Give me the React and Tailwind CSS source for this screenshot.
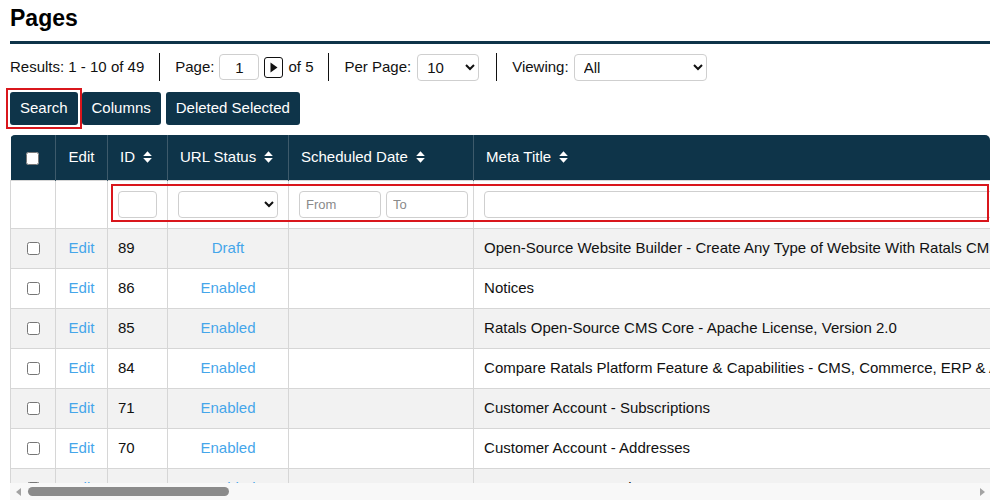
import React from "react";

const SortIcon = () => (
  <svg width="9" height="12" viewBox="0 0 9 12" className="inline-block ml-[8px] align-[-1px]">
    <path d="M4.5 0.3 L8.8 5 H0.2 Z" fill="white" />
    <path d="M0.2 7 H8.8 L4.5 11.7 Z" fill="white" />
  </svg>
);

const rows = [
  { id: 89, status: "Draft", title: "Open-Source Website Builder - Create Any Type of Website With Ratals CMS & Commerce" },
  { id: 86, status: "Enabled", title: "Notices" },
  { id: 85, status: "Enabled", title: "Ratals Open-Source CMS Core - Apache License, Version 2.0" },
  { id: 84, status: "Enabled", title: "Compare Ratals Platform Feature & Capabilities - CMS, Commerce, ERP & AI" },
  { id: 71, status: "Enabled", title: "Customer Account - Subscriptions" },
  { id: 70, status: "Enabled", title: "Customer Account - Addresses" },
  { id: 69, status: "Enabled", title: "Customer Account - License Keys" },
  { id: 68, status: "Enabled", title: "Customer Account - Orders" },
  { id: 67, status: "Enabled", title: "Customer Account - Profile" },
  { id: 66, status: "Enabled", title: "Customer Account - Dashboard" },
];

const extraCols = ["Meta Description", "URL", "Template", "Date Created", "Date Modified"];

export default function App() {
  return (
    <div className="font-['Liberation_Sans',Arial,sans-serif] text-[15px] text-[#111] bg-white px-[10px] w-[1000px] h-[500px] overflow-hidden">
      <h1 className="pt-[4px] text-[23px] leading-[28px] font-bold text-black">Pages</h1>
      <div className="mt-[9px] h-[3px] bg-[#0e3449]" />

      {/* toolbar */}
      <div className="mt-[9px] flex items-center h-[28px]">
        <span className="pr-[15px]">Results: 1 - 10 of 49</span>
        <div className="flex items-center h-full border-l border-[#111] pl-[15px] pr-[15px]">
          <span>Page:</span>
          <input
            readOnly
            value="1"
            className="ml-[5px] w-[40px] h-[26px] border border-[#cfcfcf] rounded-[4px] text-center text-[15px]"
          />
          <button className="ml-[5px] w-[19px] h-[21px] border-[1.5px] border-[#111] rounded-[3px] flex items-center justify-center">
            <svg width="8" height="11" viewBox="0 0 8 11">
              <path d="M0.5 0.5 L7.5 5.5 L0.5 10.5 Z" fill="#111" />
            </svg>
          </button>
          <span className="ml-[5px]">of 5</span>
        </div>
        <div className="flex items-center h-full border-l border-[#111] pl-[15px] pr-[17px]">
          <span>Per Page:</span>
          <select className="ml-[6px] w-[62px] h-[27px] border border-[#cfcfcf] rounded-[4px] pl-[5px] text-[15px]">
            <option>10</option>
          </select>
        </div>
        <div className="flex items-center h-full border-l border-[#111] pl-[15px]">
          <span>Viewing:</span>
          <select className="ml-[5px] w-[133px] h-[27px] border border-[#cfcfcf] rounded-[4px] pl-[5px] text-[15px]">
            <option>All</option>
          </select>
        </div>
      </div>

      {/* buttons */}
      <div className="mt-[7px] flex items-center">
        <div className="-ml-[4px] border-2 border-[#d9161c] p-[2px]">
          <button className="block h-[33px] px-[10px] rounded-[3px] bg-[#0e3449] text-white">Search</button>
        </div>
        <button className="ml-[0px] h-[33px] px-[10px] rounded-[3px] bg-[#0e3449] text-white">Columns</button>
        <button className="ml-[5px] h-[33px] px-[10px] rounded-[3px] bg-[#0e3449] text-white">Deleted Selected</button>
      </div>

      {/* table */}
      <div className="relative mt-[6px]">
        <div className="h-[348px] overflow-hidden rounded-t-[5px]">
          <table className="table-fixed border-collapse w-[4530px]">
            <colgroup>
              <col className="w-[45px]" />
              <col className="w-[52px]" />
              <col className="w-[60px]" />
              <col className="w-[121px]" />
              <col className="w-[185px]" />
              <col className="w-[900px]" />
              {extraCols.map((c) => (
                <col key={c} className="w-[633px]" />
              ))}
            </colgroup>
            <thead>
              <tr className="bg-[#0e3449] text-white h-[45px]">
                <th className="border-r border-[#3d5a6b] text-center font-normal">
                  <input type="checkbox" className="align-middle" />
                </th>
                <th className="border-r border-[#3d5a6b] text-center font-normal">Edit</th>
                <th className="border-r border-[#3d5a6b] text-left font-normal px-[12px] whitespace-nowrap">
                  ID<SortIcon />
                </th>
                <th className="border-r border-[#3d5a6b] text-left font-normal px-[12px] whitespace-nowrap">
                  URL Status<SortIcon />
                </th>
                <th className="border-r border-[#3d5a6b] text-left font-normal px-[12px] whitespace-nowrap">
                  Scheduled Date<SortIcon />
                </th>
                <th className="border-r border-[#3d5a6b] text-left font-normal px-[12px] whitespace-nowrap">
                  Meta Title<SortIcon />
                </th>
                {extraCols.map((c) => (
                  <th key={c} className="border-r border-[#3d5a6b] text-left font-normal px-[12px] whitespace-nowrap">
                    {c}<SortIcon />
                  </th>
                ))}
              </tr>
            </thead>
            <tbody>
              <tr className="h-[48px] bg-white">
                <td className="border border-[#d6d6d6]" />
                <td className="border border-[#d6d6d6]" />
                <td className="border border-[#d6d6d6] px-[10px]">
                  <input className="block w-[39px] h-[27px] border border-[#cfcfcf] rounded-[4px]" />
                </td>
                <td className="border border-[#d6d6d6] px-[10px]">
                  <select className="block w-[100px] h-[27px] border border-[#cfcfcf] rounded-[4px]">
                    <option></option>
                  </select>
                </td>
                <td className="border border-[#d6d6d6] px-[10px]">
                  <div className="flex gap-[5px]">
                    <input
                      placeholder="From"
                      className="w-[82px] h-[27px] border border-[#cfcfcf] rounded-[4px] px-[6px] text-[13px] placeholder:text-[#8a8a8a]"
                    />
                    <input
                      placeholder="To"
                      className="w-[82px] h-[27px] border border-[#cfcfcf] rounded-[4px] px-[6px] text-[13px] placeholder:text-[#8a8a8a]"
                    />
                  </div>
                </td>
                <td className="border border-[#d6d6d6] px-[10px]">
                  <input className="block w-full h-[27px] border border-[#cfcfcf] rounded-[4px]" />
                </td>
                {extraCols.map((c) => (
                  <td key={c} className="border border-[#d6d6d6] px-[10px]">
                    <input className="block w-full h-[27px] border border-[#cfcfcf] rounded-[4px]" />
                  </td>
                ))}
              </tr>
              {rows.map((r, i) => (
                <tr key={r.id} className={`h-[40px] ${i % 2 === 0 ? "bg-[#f2f2f2]" : "bg-white"}`}>
                  <td className="border border-[#d6d6d6] text-center">
                    <input type="checkbox" className="align-middle" />
                  </td>
                  <td className="border border-[#d6d6d6] text-center text-[#45a6ea]">Edit</td>
                  <td className="border border-[#d6d6d6] pl-[10px]">{r.id}</td>
                  <td className="border border-[#d6d6d6] text-center text-[#45a6ea]">{r.status}</td>
                  <td className="border border-[#d6d6d6]" />
                  <td className="border border-[#d6d6d6] pl-[10px] whitespace-nowrap overflow-hidden">{r.title}</td>
                  {extraCols.map((c) => (
                    <td key={c} className="border border-[#d6d6d6]" />
                  ))}
                </tr>
              ))}
            </tbody>
          </table>
        </div>

        {/* horizontal scrollbar */}
        <div className="flex items-center h-[17px] bg-[#f8f8f8]">
          <div className="w-[16px] flex items-center justify-center">
            <svg width="5" height="8" viewBox="0 0 5 8">
              <path d="M5 0 L0 4 L5 8 Z" fill="#a3a3a3" />
            </svg>
          </div>
          <div className="flex-1 px-[2px] flex items-center">
            <div className="h-[9px] w-[201px] rounded-full bg-[#8b8b8b]" />
          </div>
          <div className="w-[16px] flex items-center justify-center">
            <svg width="5" height="8" viewBox="0 0 5 8">
              <path d="M0 0 L5 4 L0 8 Z" fill="#a3a3a3" />
            </svg>
          </div>
        </div>

        {/* annotation box over filter row */}
        <div className="absolute left-[101px] top-[49px] w-[878px] h-[38px] border-2 border-[#d9161c] pointer-events-none" />
      </div>
    </div>
  );
}
